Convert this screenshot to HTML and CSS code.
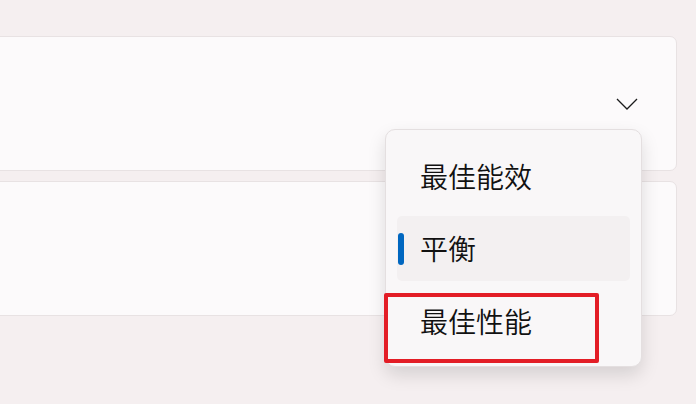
FILE: index.html
```html
<!DOCTYPE html>
<html lang="zh-CN">

<head>
    <meta charset="UTF-8">
    <meta name="viewport" content="width=device-width, initial-scale=1.0">
    <link rel="stylesheet" href="styles.css">
    <title>电源模式</title>
</head>

<body>
    <div class="settings">
        <div class="card card-mode">
            <svg class="chevron" width="22" height="12" viewBox="0 0 22 12">
                <path d="M1 1 L11 11 L21 1" fill="none" stroke="#1b1b1b" stroke-width="1.3" />
            </svg>
        </div>
        <div class="card"></div>
    </div>

    <div class="menu">
        <div class="item">最佳能效</div>
        <div class="item selected">
            <span class="indicator"></span>
            平衡
        </div>
        <div class="item">最佳性能</div>
        <div class="highlight"></div>
    </div>
</body>

</html>
```

FILE: styles.css
```css
* {
    padding: 0;
    margin: 0;
    box-sizing: border-box;
}

body {
    background-color: #f5eff0;
    font-family: "Noto Sans CJK SC", "Noto Sans", sans-serif;
    color: #111;
    width: 696px;
    height: 404px;
    overflow: hidden;
    position: relative;
}

.settings {
    display: flex;
    flex-direction: column;
    gap: 10px;
    padding-top: 36px;
    padding-right: 19px;
    margin-left: -12px;
}

.card {
    height: 135px;
    background-color: #fcfafb;
    border: 1px solid #e8e2e3;
    border-radius: 7px;
}

.card-mode {
    display: flex;
    align-items: center;
    justify-content: flex-end;
    padding-right: 38px;
}

.chevron {
    display: block;
}

.menu {
    position: absolute;
    left: 385px;
    top: 129px;
    width: 257px;
    height: 238px;
    padding: 14px 11px 13px 11px;
    display: flex;
    flex-direction: column;
    gap: 8px;
    background-color: #f9f7f8;
    border: 1px solid #e4dfe0;
    border-radius: 10px;
    box-shadow: 0 8px 18px rgba(0, 0, 0, 0.13);
}

.item {
    position: relative;
    height: 65px;
    display: flex;
    align-items: center;
    padding-left: 23px;
    font-size: 28px;
    font-weight: 350;
    border-radius: 5px;
}

.selected {
    background-color: #f3f0f1;
}

.indicator {
    position: absolute;
    left: 1px;
    top: 17px;
    width: 6px;
    height: 32px;
    border-radius: 3px;
    background-color: #0067c0;
}

.highlight {
    position: absolute;
    left: -2px;
    top: 163px;
    width: 215px;
    height: 70px;
    border: 4px solid #e31d26;
    border-radius: 2px;
}
```
